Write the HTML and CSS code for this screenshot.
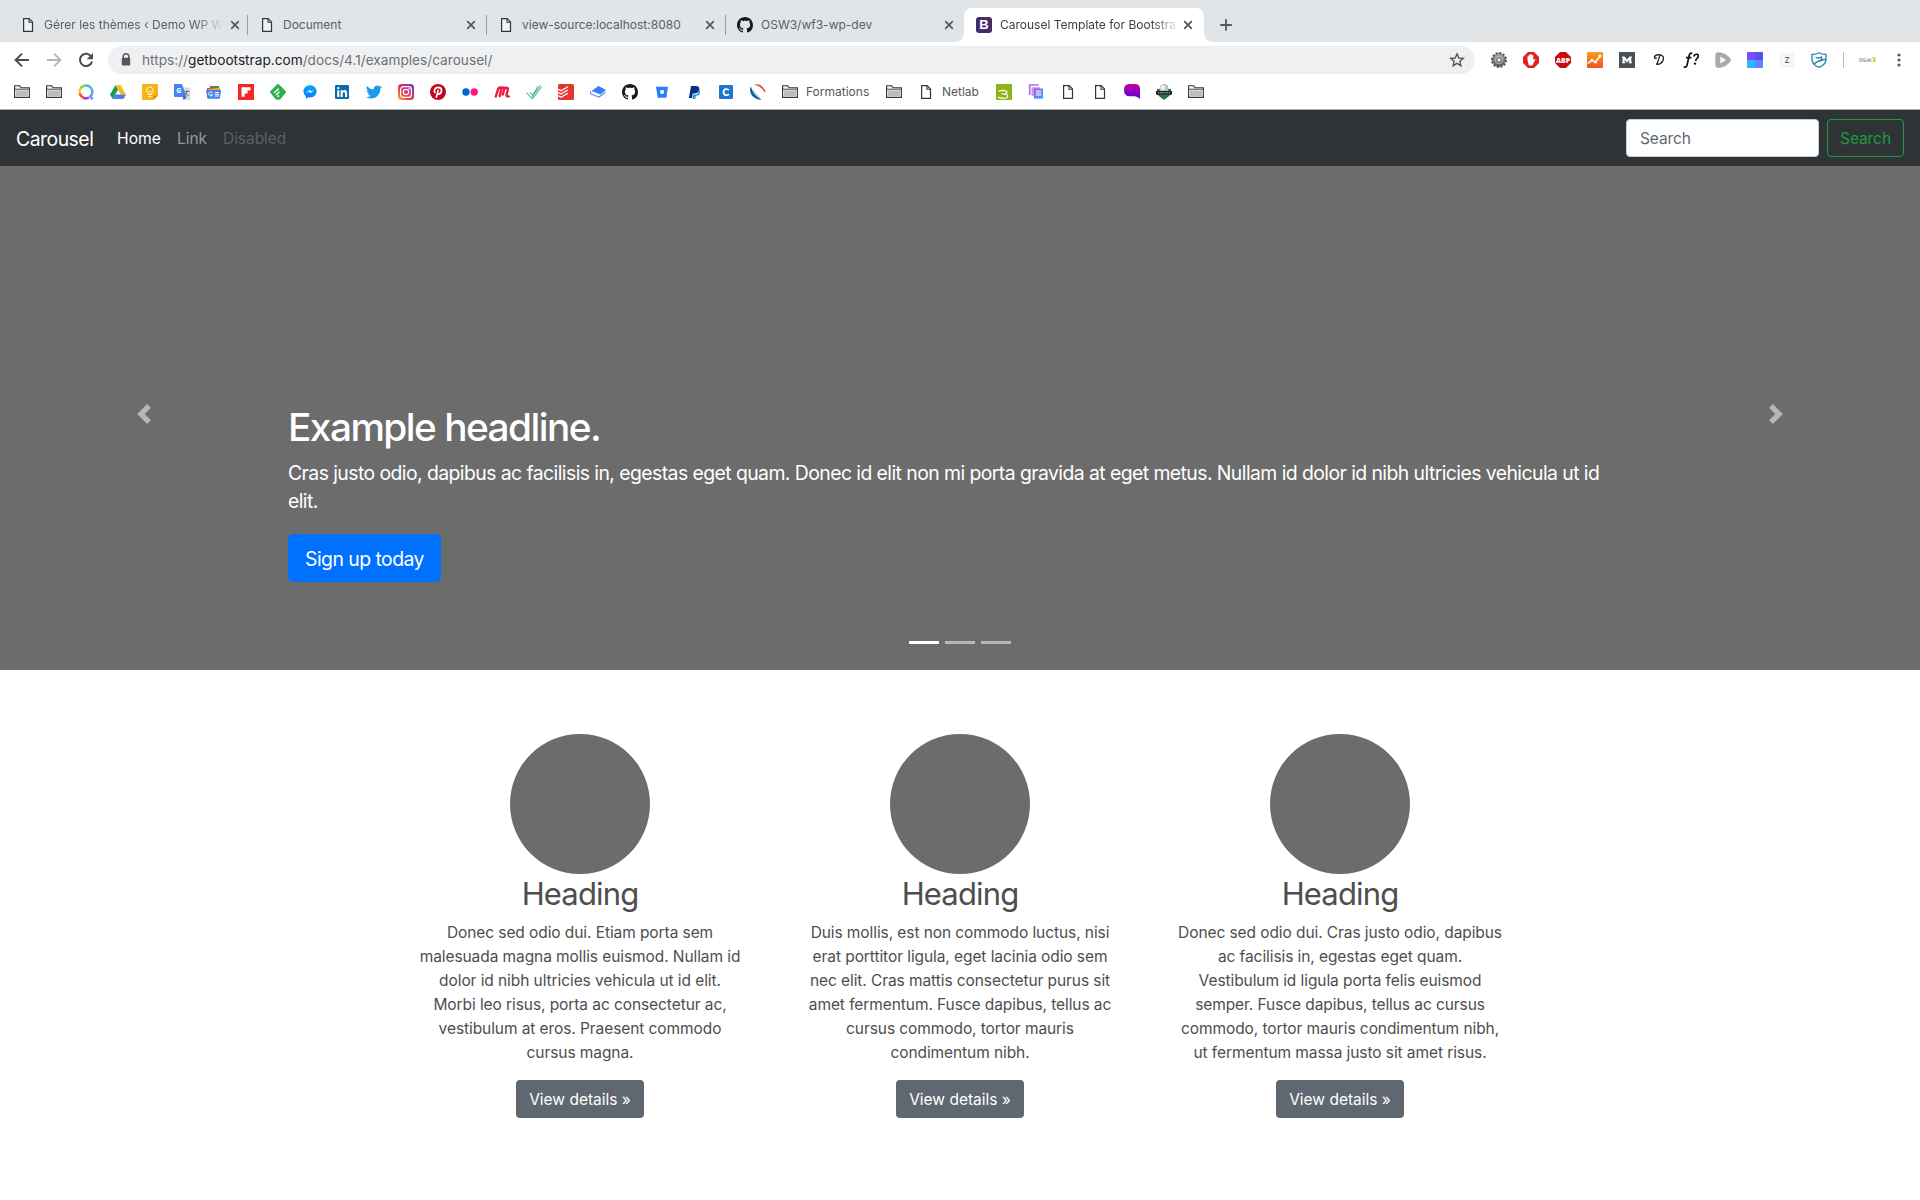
FILE: index.html
```html
<!DOCTYPE html>
<html lang="en">
<head>
<meta charset="utf-8">
<title>Carousel Template for Bootstrap</title>
<link rel="stylesheet" href="styles.css">
</head>
<body>
<svg class="defs" width="0" height="0">
  <defs>
    <symbol id="file" viewBox="0 0 16 16"><path d="M3.6 1.6h5.6l3.3 3.3v9.5H3.6z" fill="#fff" fill-opacity=".5" stroke="#333537" stroke-width="1.2"/><path d="M9 1.8V5.2h3.4" fill="none" stroke="#333537" stroke-width="1.1"/></symbol>
    <symbol id="folder" viewBox="0 0 16 16"><path d="M.6 13.4V1.800h5l1.6 2h8.2v9.600z" fill="#fff" stroke="#333537" stroke-width="1.1"/><path d="M1.8 6.3h12.5v6H1.8z" fill="#bebebe"/><path d="M.8 5.2h14.4" stroke="#333537" stroke-width=".9"/></symbol>
    <symbol id="close" viewBox="0 0 16 16"><path d="M4.2 4.2l7.6 7.6M11.8 4.2l-7.6 7.6" stroke="#54585c" stroke-width="1.7" fill="none"/></symbol>
    <symbol id="github" viewBox="0 0 16 16"><path fill="#17191c" d="M8 0C3.58 0 0 3.58 0 8c0 3.54 2.29 6.53 5.47 7.59.4.07.55-.17.55-.38 0-.19-.01-.82-.01-1.49-2.01.37-2.53-.49-2.69-.94-.09-.23-.48-.94-.82-1.13-.28-.15-.68-.52-.01-.53.63-.01 1.08.58 1.23.82.72 1.21 1.87.87 2.33.66.07-.52.28-.87.51-1.07-1.78-.2-3.64-.89-3.64-3.95 0-.87.31-1.59.82-2.15-.08-.2-.36-1.02.08-2.12 0 0 .67-.21 2.2.82.64-.18 1.32-.27 2-.27s1.36.09 2 .27c1.53-1.04 2.2-.82 2.2-.82.44 1.1.16 1.92.08 2.12.51.56.82 1.27.82 2.15 0 3.07-1.87 3.75-3.65 3.95.29.25.54.73.54 1.48 0 1.07-.01 1.93-.01 2.2 0 .21.15.46.55.38A8.01 8.01 0 0 0 16 8c0-4.42-3.58-8-8-8z"/></symbol>
    <linearGradient id="g-insta" x1="0" y1="1" x2="1" y2="0"><stop offset="0" stop-color="#fdb43c"/><stop offset=".35" stop-color="#f0433c"/><stop offset=".65" stop-color="#c22c92"/><stop offset="1" stop-color="#5646c8"/></linearGradient>
    <linearGradient id="g-chat" x1="0" y1="0" x2="0" y2="1"><stop offset="0" stop-color="#c000a0"/><stop offset="1" stop-color="#5a00d8"/></linearGradient>
    <linearGradient id="g-copy" x1="0" y1="0" x2="1" y2="1"><stop offset="0" stop-color="#b44be8"/><stop offset="1" stop-color="#2aa8ff"/></linearGradient>
    <linearGradient id="g-msg" x1="0" y1="0" x2="0" y2="1"><stop offset="0" stop-color="#00aaff"/><stop offset="1" stop-color="#0a78ff"/></linearGradient>
    <linearGradient id="g-chart" x1="0" y1="0" x2="0" y2="1"><stop offset="0" stop-color="#f8a01c"/><stop offset="1" stop-color="#f4511e"/></linearGradient>
    <linearGradient id="g-gear" x1="0" y1="0" x2="0" y2="1"><stop offset="0" stop-color="#a8a8a8"/><stop offset="1" stop-color="#555"/></linearGradient>
  </defs>
</svg>

<header class="browser">
  <div class="tabstrip">
    <div class="tab"><svg class="ico"><use href="#file"/></svg><span class="tab-title fade">Gérer les thèmes ‹ Demo WP W</span><svg class="ico"><use href="#close"/></svg></div>
    <div class="tab"><svg class="ico"><use href="#file"/></svg><span class="tab-title">Document</span><svg class="ico"><use href="#close"/></svg></div>
    <div class="tab"><svg class="ico"><use href="#file"/></svg><span class="tab-title">view-source:localhost:8080</span><svg class="ico"><use href="#close"/></svg></div>
    <div class="tab last"><svg class="ico"><use href="#github"/></svg><span class="tab-title">OSW3/wf3-wp-dev</span><svg class="ico"><use href="#close"/></svg></div>
    <div class="tab active"><span class="ico bs-icon">B</span><span class="tab-title fade">Carousel Template for Bootstra</span><svg class="ico"><use href="#close"/></svg></div>
    <svg class="ico new-tab" viewBox="0 0 16 16"><path d="M8 2.2v11.6M2.2 8h11.6" stroke="#54585c" stroke-width="1.8"/></svg>
  </div>

  <div class="toolbar">
    <div class="nav-buttons">
      <svg class="ico" viewBox="0 0 16 16"><path d="M15 8H2M8 1.6L1.6 8 8 14.4" fill="none" stroke="#4a4e52" stroke-width="2"/></svg>
      <svg class="ico" viewBox="0 0 16 16"><path d="M1 8h13M8 1.6L14.4 8 8 14.4" fill="none" stroke="#b4b6b8" stroke-width="2"/></svg>
      <svg class="ico" viewBox="0 0 16 16"><path d="M13.2 4.6A6.1 6.1 0 1 0 14 9.4" fill="none" stroke="#4a4e52" stroke-width="2"/><path d="M15 .9v6.3H8.7z" fill="#4a4e52"/></svg>
    </div>
    <div class="omnibox">
      <svg class="ico" viewBox="0 0 16 16"><path d="M5.2 7V4.6a2.8 2.8 0 0 1 5.6 0V7" fill="none" stroke="#54585c" stroke-width="1.5"/><rect x="3.8" y="5.8" width="8.4" height="7.6" rx="1" fill="#54585c"/></svg>
      <span class="url">https://<b>getbootstrap.com</b>/docs/4.1/examples/carousel/</span>
      <svg class="ico" viewBox="0 0 16 16"><path d="M8 1.900l1.800 4.100 4.500.4-3.400 2.900 1 4.400L8 11.400l-3.900 2.300 1-4.400L1.700 6.400l4.500-.4z" fill="none" stroke="#54585c" stroke-width="1.4"/></svg>
    </div>
    <div class="extensions">
      <svg class="ico" viewBox="0 0 16 16"><circle cx="8" cy="8" r="7" fill="none" stroke="#505050" stroke-width="2" stroke-dasharray="2.200 1.460"/><circle cx="8" cy="8" r="6.300" fill="url(#g-gear)" stroke="#4c4c4c" stroke-width=".6"/><circle cx="8" cy="8" r="3.800" fill="none" stroke="#c8c8c8" stroke-width=".8"/><circle cx="8" cy="8" r="1.500" fill="#f2f2f2"/></svg>
      <svg class="ico" viewBox="0 0 16 16"><path d="M5 0h6l5 5v6l-5 5H5l-5-5V5z" fill="#e0211f"/><path d="M4.500 8V4.500q.7-.8 1.300 0V3q.8-.9 1.500 0v-.6q.8-.8 1.500 0V3.500q.8-.8 1.500 0v5l1.200-1.400q1-.3.8.6L10 12.200l-.5 1.300H5.900z" fill="#fff"/></svg>
      <svg class="ico" viewBox="0 0 16 16"><path d="M5 0h6l5 5v6l-5 5H5l-5-5V5z" fill="#c70d0d"/><text x="8" y="10.600" text-anchor="middle" class="glyph abp">ABP</text></svg>
      <svg class="ico" viewBox="0 0 16 16"><rect width="16" height="16" rx="1" fill="url(#g-chart)"/><path d="M1 11.500l4-3.300 3.200 2.100 5-6.300" fill="none" stroke="#fff" stroke-width="1.600"/><circle cx="5" cy="8.200" r="1.400" fill="#fff"/><circle cx="8.500" cy="10.200" r="1.400" fill="#fff"/><circle cx="13" cy="4" r="1.500" fill="#fff"/></svg>
      <svg class="ico" viewBox="0 0 16 16"><rect width="16" height="16" fill="#4a5054"/><path d="M3 4.500h2.500L8 7.600l2.500-3.100H13v1H12.300v4.800h.7v1H9.600v-1h.6V8L8 10.500 5.700 8v2.300h.7v1H3v-1h.6V5.500H3z" fill="#fff"/></svg>
      <svg class="ico" viewBox="0 0 16 16"><path d="M5.200 3.200Q3 4.200 3.600 6q1.200 1 2.100-.4M8.800 3.600Q7.500 8 6 12M3.900 3.500Q8.500 2 11 3.500q2.500 2 .8 5.400-2 3.600-5.300 3.400-.8 0-1.500-.6" fill="none" stroke="#222" stroke-width="1.300"/></svg>
      <svg class="ico" viewBox="0 0 16 16"><path d="M9.300 1.600Q7.300.3 6.300 3L4 13.300Q3 15.700.7 15M3 5.700h5.500" fill="none" stroke="#111" stroke-width="1.700"/><path d="M10.700 4.600q.8-2.700 3.300-2.300 2.200.8 1 3.100-2 1.700-2.500 3.600" fill="none" stroke="#111" stroke-width="1.700"/><circle cx="12" cy="11.600" r="1.200" fill="#111"/></svg>
      <svg class="ico" viewBox="0 0 16 16"><path d="M.3 2.500Q.8 0 3.500.2 11 .8 15.200 6.300q1.500 1.700 0 3.400Q11 15.300 4 15.900.8 16 .4 13.500z" fill="#a9a9a9"/><path d="M5.300 4.500l5.800 3.500-5.800 3.500z" fill="#fff"/></svg>
      <svg class="ico" viewBox="0 0 16 16"><path d="M0 1q0-1 1-1h7v8H0z" fill="#7c4dff"/><path d="M8 0h7q1 0 1 1v7H8z" fill="#5450f4"/><path d="M0 8h8v8H1q-1 0-1-1z" fill="#2bb6ff"/><path d="M8 8h8v7q0 1-1 1H8z" fill="#5a86ff"/></svg>
      <svg class="ico" viewBox="0 0 16 16"><rect x="1.500" y="2" width="13" height="12.500" fill="#f7f7f7" stroke="#ececec" stroke-width=".7"/><text x="8" y="10.900" text-anchor="middle" class="glyph zed">Z</text></svg>
      <svg class="ico" viewBox="0 0 16 16"><path d="M8 .8Q4.500 2.800 1 2.300v5.500q.6 5 7 7.500 6.400-2.500 7-7.500V2.300Q11.500 2.800 8 .8z" fill="none" stroke="#2787a5" stroke-width="1.300"/><path d="M4.500 5.300Q8 7 11 4.500M10 5.400q1.700 1.500-.6 3Q5.500 9.500 3 12M8 9.300Q11 7.800 15 7.300" fill="none" stroke="#2787a5" stroke-width="1.400"/></svg>
    </div>
    <div class="profile"><span class="avatar">osw<i>3</i></span></div>
    <svg class="ico menu" viewBox="0 0 16 16"><g fill="#54585c"><circle cx="8" cy="3" r="1.600"/><circle cx="8" cy="8" r="1.600"/><circle cx="8" cy="13" r="1.600"/></g></svg>
  </div>

  <div class="bookmarks">
    <svg class="ico"><use href="#folder"/></svg>
    <svg class="ico"><use href="#folder"/></svg>
    <svg class="ico" viewBox="0 0 16 16"><g fill="none" stroke-width="2.500"><path d="M8 1.500A6.500 6.500 0 0 1 14.300 7" stroke="#35b8e8"/><path d="M2.300 4.700A6.500 6.500 0 0 1 8 1.500" stroke="#8bd04a"/><path d="M1.800 9.500A6.500 6.500 0 0 1 2.300 4.700" stroke="#ffcf1c"/><path d="M6 14A6.500 6.500 0 0 1 1.800 9.300" stroke="#ff4f3a"/><path d="M11 13.500A6.500 6.500 0 0 1 5.700 14" stroke="#a833f0"/><path d="M14.300 6.800q.3 4-2 5.500l2.300 3" stroke="#5c9cf4"/></g></svg>
    <svg class="ico" viewBox="0 0 16 16"><path d="M5.400 1.200h5.200L16 10.400h-5.300z" fill="#f6bd16"/><path d="M5.400 1.200L8 5.700 2.700 15 0 10.400z" fill="#179c56"/><path d="M5.300 10.400H16L13.400 15H2.700z" fill="#4a80e8"/></svg>
    <svg class="ico" viewBox="0 0 16 16"><path d="M0 0h16v11.500L11.500 16H0z" fill="#f4b518"/><path d="M16 11.500L11.500 16v-4.500z" fill="#e08f12"/><path d="M6.400 10.500V9.200a3.300 3.300 0 1 1 3 0v1.300zM6.300 12.500h3.200M7 7l1 1.300L9 7" fill="none" stroke="#fff" stroke-width=".9"/></svg>
    <svg class="ico" viewBox="0 0 16 16"><path d="M6 3.500h10V16H9z" fill="#d9dadb"/><path d="M0 0h8l4.500 13H1q-1 0-1-1z" fill="#4585f0"/><path d="M9 13h3.500L9.800 16z" fill="#3058b8"/><text x="4.800" y="8.500" text-anchor="middle" class="glyph gee">G</text><path d="M10.500 7.500h5M13 6.300v1.200q-.5 3-2.200 4.200M11.300 8.500q1 2 3.500 3.200" fill="none" stroke="#66717b" stroke-width=".9"/></svg>
    <svg class="ico" viewBox="0 0 16 16"><path d="M4 2h9v4H4z" fill="#1e9e57"/><path d="M1 4l12-1 1 4H1z" fill="#ec4436"/><path d="M1.500 5.300l12-1.500 1 4H2z" fill="#f6b91e"/><path d="M.8 5.700h13.400q1 0 .8 1l-1 7q-.2 1-1 1H2.200q-.8 0-1-1L.1 6.700q0-1 .7-1z" fill="#4382ec"/><path d="M6.300 8.500a2 2 0 1 0 .4 2H5.200M8.800 8.500H13M8.800 10.300H13M8.800 12H13" fill="none" stroke="#fff" stroke-width="1"/></svg>
    <svg class="ico" viewBox="0 0 16 16"><rect width="16" height="16" fill="#f22828"/><path d="M3.500 3.200h9v3.200H9.600v3.200H6.700v3.200H3.500z" fill="#fff"/></svg>
    <svg class="ico" viewBox="0 0 16 16"><path d="M6.900.5q1.100-.9 2.200 0l6.400 6.500q.9 1 0 2L11 14.500q-1 1.200-2 1.200H7q-1 0-2-1.200L.500 9q-.9-1 0-2z" fill="#2bb24c"/><path d="M4.500 8.600L8.300 5M6.300 10.700l2.800-2.600M8 12.500l.6-.6" stroke="#fff" stroke-width="1.400" stroke-linecap="round"/></svg>
    <svg class="ico" viewBox="0 0 16 16"><path d="M8 1.200c3.800 0 6.600 2.700 6.600 6.100S11.800 13.500 8 13.500l-1.700-.2L3.900 14.700v-2.500Q1.400 10.500 1.400 7.300C1.400 3.900 4.200 1.200 8 1.200z" fill="url(#g-msg)"/><path d="M4 9.200l3.300-3.400L9 7.500l3.100-1.700L8.800 9.300 7.100 7.600z" fill="#fff"/></svg>
    <svg class="ico" viewBox="0 0 16 16"><rect x="1" y="1" width="14" height="14" rx="1" fill="#0a6cab"/><path d="M3.200 6.300h2.100V13H3.200zM6.600 6.300h2v.9q.7-1.100 2.200-1.100 2.300 0 2.300 3V13H11V9.600q0-1.700-1.100-1.700-1.200 0-1.200 1.700V13H6.600z" fill="#fff"/><circle cx="4.250" cy="4.100" r="1.200" fill="#fff"/></svg>
    <svg class="ico" viewBox="0 0 16 16"><path fill="#1e98ee" d="M5 14.500c6 0 9.300-5 9.300-9.300v-.4A6.700 6.700 0 0 0 16 3.100a6.600 6.600 0 0 1-1.900.5 3.300 3.300 0 0 0 1.400-1.800 6.600 6.600 0 0 1-2.100.8 3.300 3.300 0 0 0-5.600 3A9.300 9.300 0 0 1 1.100 2.200a3.300 3.300 0 0 0 1 4.400 3.200 3.200 0 0 1-1.500-.4 3.300 3.300 0 0 0 2.600 3.200 3.200 3.200 0 0 1-1.500.1 3.300 3.300 0 0 0 3.100 2.200A6.600 6.600 0 0 1 0 13a9.300 9.300 0 0 0 5 1.500"/></svg>
    <svg class="ico" viewBox="0 0 16 16"><rect width="16" height="16" rx="3.500" fill="url(#g-insta)"/><rect x="2.600" y="2.600" width="10.800" height="10.800" rx="3" fill="none" stroke="#fff" stroke-width="1.200"/><circle cx="8" cy="8" r="2.700" fill="none" stroke="#fff" stroke-width="1.200"/><circle cx="11.200" cy="4.800" r=".8" fill="#fff"/></svg>
    <svg class="ico" viewBox="0 0 16 16"><circle cx="8" cy="8" r="8" fill="#bd081c"/><path d="M5.400 8.800Q4 7.500 4.500 5.800 5.500 3.300 8.300 3.400q3.300.2 3.300 3-.3 3.500-2.700 3.700-1.300 0-1.600-1M8.300 5.700L6.200 13.700" fill="none" stroke="#fff" stroke-width="1.600"/></svg>
    <svg class="ico" viewBox="0 0 16 16"><circle cx="4" cy="8" r="3.700" fill="#0062dc"/><circle cx="12.200" cy="8" r="3.700" fill="#ff1a80"/></svg>
    <svg class="ico" viewBox="0 0 16 16"><path d="M1.800 12.500L4.200 4.800Q5 3 7.500 3.700L5.800 12M7.300 4.500Q9.500 2.800 10.500 4.200L8.800 10.500M10.800 4.500q2.500-1.700 3.200.3L12.500 11q0 1.900 2.300 1.400" fill="none" stroke="#ee1b40" stroke-width="2.400" stroke-linecap="round" stroke-linejoin="round"/></svg>
    <svg class="ico" viewBox="0 0 16 16"><path d="M.5 8.500l5 5.500L14.700 1M4 8.500l2.600 2.700L12 2.500M6.500 15l9-12" fill="none" stroke="#4cc09b" stroke-width="1.100"/></svg>
    <svg class="ico" viewBox="0 0 16 16"><rect width="16" height="16" rx="1.500" fill="#e0382c"/><path d="M0 5l3 1.700L10 2.800M0 8.300L3 10l7-4M0 11.600l3 1.700 7-4" fill="none" stroke="#fff" stroke-width="1.200"/></svg>
    <svg class="ico" viewBox="0 0 16 16"><path d="M8.500 2L16 6l-5.500 4.500L1.500 7z" fill="#3b7bfa"/><path d="M1 7.300q-1.200 1.700 0 2.800l8 3 6.500-4.800" fill="none" stroke="#5c92fb" stroke-width="1.200"/></svg>
    <svg class="ico"><use href="#github"/></svg>
    <svg class="ico" viewBox="0 0 16 16"><path d="M2 2.700h12l-1.700 11H3.700z" fill="#2a7dfb"/><path d="M6 6.200h4.200l-.6 3.500h-3z" fill="#fff"/></svg>
    <svg class="ico" viewBox="0 0 16 16"><path d="M5 2h5.500q3.500.5 2.700 4Q12.200 9.600 8.500 9.600H6.800L6 14H2.900z" fill="#0b2f82"/><path d="M12.800 5q1 5.500-4.300 5.600H7.300L6.500 15h2.700l.6-3.200q4.400 0 4.300-4.300z" fill="#12a0de"/></svg>
    <svg class="ico" viewBox="0 0 16 16"><rect x="1" y="1" width="14" height="14" rx="1" fill="#1f74cb"/><path d="M10.800 6.200Q9.500 4.600 7.500 5.100 5.300 6 5.500 8.500q.5 2.700 3 2.700 1.500 0 2.400-1.300" fill="none" stroke="#fff" stroke-width="1.700"/></svg>
    <svg class="ico" viewBox="0 0 16 16"><path d="M4.200.8Q9-1 13 3.500q2.700 3 2.200 4.800-1.200-.6-2-2.300Q10.500 2 4.200.8z" fill="#dd3a1a"/><path d="M.8 2.500Q-1.500 8.500 3.500 13q4 3.300 8 2.600Q3.500 11.500.8 2.500z" fill="#155b9c"/><path d="M2.500 5.500L9.500 14" stroke="#7fb2d8" stroke-width=".8"/></svg>
    <span class="bookmark"><svg class="ico"><use href="#folder"/></svg>Formations</span>
    <svg class="ico"><use href="#folder"/></svg>
    <span class="bookmark short"><svg class="ico"><use href="#file"/></svg>Netlab</span>
    <svg class="ico" viewBox="0 0 16 16"><rect width="16" height="16" fill="#8cb518"/><path d="M2.500 7.300Q4 6.300 7 6.300q4 .1 4 1.800Q11 10 7.500 10H5.300M7.500 10q4.200 0 4.200 2.200Q11.500 14.300 7 14.300q-3.500 0-5-1.300" fill="none" stroke="#fff" stroke-width="1.200"/></svg>
    <svg class="ico" viewBox="0 0 16 16"><path d="M1.700 11V1h9" fill="none" stroke="#b266ea" stroke-width="1.600"/><path d="M3.500 3.200H12v9H3.500z" fill="#c494f1"/><path d="M6 4.500h9V15l-1.500-.7-1.500.7-1.500-.7-1.500.7-1.500-.7L6 15z" fill="url(#g-copy)"/><path d="M7.800 7h5.500M7.800 9h5.500M7.800 11h5.500" stroke="#fff"/></svg>
    <svg class="ico"><use href="#file"/></svg>
    <svg class="ico"><use href="#file"/></svg>
    <svg class="ico" viewBox="0 0 16 16"><path d="M5 0h6q5 0 5 5v10q-2-2.300-5-2.700H6Q0 12.300 0 6.200 0 0 5 0z" fill="url(#g-chat)"/></svg>
    <svg class="ico" viewBox="0 0 16 16"><path d="M1 5h14v5.500L8 16 1 10.500z" fill="#2f7040"/><circle cx="8" cy="4.500" r="4.500" fill="#b9bdbb"/><circle cx="7" cy="3.500" r="2.500" fill="#eceeed"/><path d="M0 7h16v3.600H0z" fill="#17251e"/><path d="M2 8.800h12" stroke="#b9c8c0" stroke-dasharray="1.200 .6"/></svg>
    <svg class="ico"><use href="#folder"/></svg>
  </div>
</header>

<nav class="navbar">
  <span class="brand">Carousel</span>
  <div class="links"><span class="link current">Home</span><span class="link">Link</span><span class="link disabled">Disabled</span></div>
  <form class="search"><input class="search-input" type="text" placeholder="Search" aria-label="Search"><button class="btn btn-outline" type="button">Search</button></form>
</nav>

<main>
  <section class="carousel">
    <svg class="control" viewBox="0 0 8 8"><path fill="#fff" d="M5.250 0l-4 4 4 4 1.500-1.500-2.500-2.500 2.500-2.500-1.500-1.500z"/></svg>
    <div class="caption">
      <h1>Example headline.</h1>
      <p class="lead">Cras justo odio, dapibus ac facilisis in, egestas eget quam. Donec id elit non mi porta gravida at eget metus. Nullam id dolor id nibh ultricies vehicula ut id elit.</p>
      <button class="btn btn-primary" type="button">Sign up today</button>
      <div class="indicators"><span class="on"></span><span></span><span></span></div>
    </div>
    <svg class="control" viewBox="0 0 8 8"><path fill="#fff" d="M2.750 0l-1.500 1.500 2.500 2.500-2.500 2.500 1.500 1.500 4-4-4-4z"/></svg>
  </section>

  <section class="marketing">
    <article class="feature">
      <div class="circle"></div>
      <h2>Heading</h2>
      <p>Donec sed odio dui. Etiam porta sem<br>malesuada magna mollis euismod. Nullam id<br>dolor id nibh ultricies vehicula ut id elit.<br>Morbi leo risus, porta ac consectetur ac,<br>vestibulum at eros. Praesent commodo<br>cursus magna.</p>
      <button class="btn btn-secondary" type="button">View details »</button>
    </article>
    <article class="feature">
      <div class="circle"></div>
      <h2>Heading</h2>
      <p>Duis mollis, est non commodo luctus, nisi<br>erat porttitor ligula, eget lacinia odio sem<br>nec elit. Cras mattis consectetur purus sit<br>amet fermentum. Fusce dapibus, tellus ac<br>cursus commodo, tortor mauris<br>condimentum nibh.</p>
      <button class="btn btn-secondary" type="button">View details »</button>
    </article>
    <article class="feature">
      <div class="circle"></div>
      <h2>Heading</h2>
      <p>Donec sed odio dui. Cras justo odio, dapibus<br>ac facilisis in, egestas eget quam.<br>Vestibulum id ligula porta felis euismod<br>semper. Fusce dapibus, tellus ac cursus<br>commodo, tortor mauris condimentum nibh,<br>ut fermentum massa justo sit amet risus.</p>
      <button class="btn btn-secondary" type="button">View details »</button>
    </article>
  </section>
</main>
</body>
</html>
```
FILE: styles.css
```css
* { box-sizing: border-box; }
body {
  margin: 0;
  height: 1200px;
  overflow: hidden;
  background: #fff;
  color: #4e4e4e;
  font: 15.5px/24px Inter, "Liberation Sans", sans-serif;
  letter-spacing: -0.08px;
}
h1, h2, p { margin: 0; }
.defs { display: block; }
.ico { width: 16px; height: 16px; flex: none; display: block; }

/* Browser chrome */
.browser { height: 110px; border-bottom: 1px solid #a9abad; font-size: 12px; letter-spacing: 0; }
.tabstrip { display: flex; height: 42px; padding: 8px 0 0 8px; background: #e2e5e8; }
.tab {
  display: flex;
  align-items: center;
  width: 239px;
  padding: 0 7px 0 12px;
  color: #5a5e63;
  background: linear-gradient(#9a9da0, #9a9da0) right 7px / 1px 20px no-repeat;
}
.tab:not(.active) { border-right: 0; background-position: 239px 7px; box-shadow: none; }
.tab + .tab:not(.active) { background: linear-gradient(#9a9da0, #9a9da0) 0 7px / 1px 20px no-repeat; }
.tab.active { position: relative; width: 240px; padding-right: 8px; border-radius: 8px 8px 0 0; background: #fff; color: #3c4043; }
.tab.active::before, .tab.active::after {
  content: "";
  position: absolute;
  bottom: 0;
  width: 8px;
  height: 8px;
}
.tab.active::before { left: -8px; background: radial-gradient(circle at 0 0, transparent 7.5px, #fff 8px); }
.tab.active::after { right: -8px; background: radial-gradient(circle at 100% 0, transparent 7.5px, #fff 8px); }
.tab-title { flex: 1; margin: 0 4px 0 8px; white-space: nowrap; }
.fade { mask-image: linear-gradient(90deg, #000 152px, transparent 180px); }
.bs-icon { border-radius: 3px; background: #452c68; color: #fff; font: bold 13px/16px "Liberation Sans", sans-serif; text-align: center; }
.new-tab { margin: 9px 0 0 14px; }

.toolbar { display: flex; align-items: center; height: 36px; padding: 0 13px 0 14px; }
.nav-buttons { display: flex; gap: 16px; margin-right: 14px; }
.omnibox {
  display: flex;
  align-items: center;
  width: 1367px;
  height: 28px;
  padding: 0 10px;
  border-radius: 14px;
  background: #eff0f2;
}
.url { flex: 1; margin-left: 8px; font-size: 13.66px; color: #6d7175; white-space: nowrap; }
.url b { font-weight: 400; color: #202124; }
.extensions { display: flex; gap: 16px; margin-left: 16px; }
.profile { display: flex; align-items: center; justify-content: center; height: 16px; width: 48px; margin-left: 16px; border-left: 1px solid #b9bbbd; }
.avatar { font: 6.5px/16px "DejaVu Sans", sans-serif; color: #777; }
.avatar i { color: #8ee000; font-style: normal; font-weight: 700; }
.glyph { font-family: "Open Sans", sans-serif; fill: #fff; letter-spacing: 0; }
.abp { font-size: 7px; font-weight: 800; }
.zed { font-size: 8px; font-weight: 600; fill: #666; }
.gee { font-size: 7px; font-weight: 700; }

.bookmarks { display: flex; gap: 16px; height: 28px; padding: 0 14px; align-items: center; color: #54585c; }
.bookmark { display: flex; align-items: center; gap: 8px; width: 88px; white-space: nowrap; }
.bookmark.short { width: 62px; }

/* Page navigation */
.navbar { display: flex; align-items: center; height: 56px; padding: 0 16px; background: #2e3338; }
.brand { width: 77px; margin-right: 24px; padding-top: 1px; color: #fff; font-size: 19.4px; letter-spacing: -0.5px; }
.links { display: flex; gap: 16px; flex: 1; padding-top: 2px; }
.link { color: #96999b; font-size: 15.5px; letter-spacing: -0.04px; }
.link.current { color: #fff; font-size: 15.7px; letter-spacing: 0; }
.link.disabled { color: #5b6064; }
.search { display: flex; gap: 8px; }
.search-input {
  width: 193px;
  height: 38px;
  padding: 0 13px;
  border: 1px solid #c8ced4;
  border-radius: 4px;
  background: #fff;
  font: inherit;
  letter-spacing: inherit;
}
.search-input::placeholder { color: #5f6871; opacity: 1; }
.btn { height: 38px; padding: 2px 0 0; border: 1px solid transparent; border-radius: 4px; font: inherit; letter-spacing: inherit; color: #fff; }
.btn-outline { width: 77px; border-color: #209a3b; background: transparent; color: #209a3b; }

/* Carousel */
.carousel { display: flex; height: 504px; background: #6c6c6c; color: #fff; }
.control { width: 20px; height: 20px; margin: 238px 134px 0; opacity: .5; flex: none; }
.caption { position: relative; flex: 1; padding-top: 237px; }
h1 { font-size: 38.8px; font-weight: 500; line-height: 48px; letter-spacing: -1.53px; margin-bottom: 8px; }
.lead { font-size: 19.4px; line-height: 28px; letter-spacing: -0.567px; margin-bottom: 19px; }
.btn-primary { display: block; width: 153px; height: 48px; padding-top: 1px; border-radius: 5px; background: #0071ff; font-size: 19.4px; letter-spacing: -0.54px; }
.indicators { position: absolute; left: 0; right: 0; bottom: 26px; display: flex; justify-content: center; gap: 6px; }
.indicators span { width: 30px; height: 3px; background: #b5b5b5; }
.indicators .on { background: #fff; }

/* Features */
.marketing { display: flex; width: 1140px; margin: 64px auto 0; }
.feature { width: 380px; padding: 0 15px; text-align: center; white-space: nowrap; }
.circle { width: 140px; height: 140px; margin: 0 auto; border-radius: 50%; background: #6c6c6c; }
h2 { margin: 1px 0 8px; font-size: 31px; font-weight: 400; line-height: 38.4px; letter-spacing: -0.85px; }
.feature p { margin-bottom: 15px; }
.btn-secondary { width: 128px; background: #5f6871; letter-spacing: 0; }
```
